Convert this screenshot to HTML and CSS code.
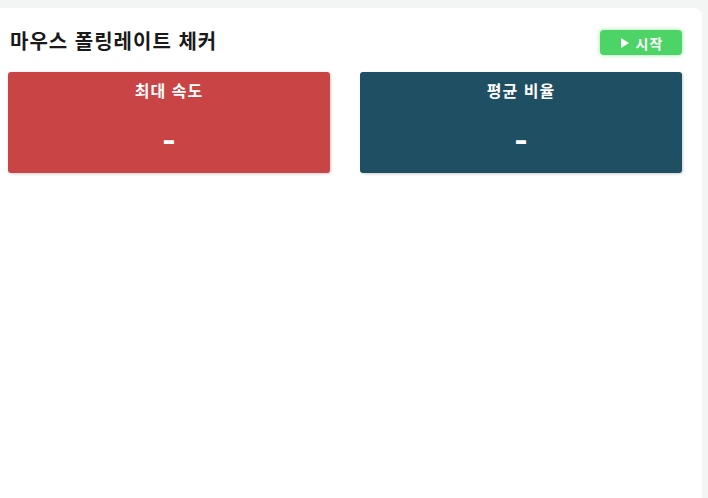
FILE: index.html
```html
<!DOCTYPE html>
<html lang="ko">
<head>
<meta charset="utf-8">
<title>마우스 폴링레이트 체커</title>
<link rel="stylesheet" href="styles.css">
</head>
<body>
<div class="panel">
  <div class="header">
    <h1 class="title">마우스 폴링레이트 체커</h1>
    <button class="start-btn"><span class="tri"></span>시작</button>
  </div>
  <div class="cards">
    <div class="card card-red">
      <div class="card-label">최대 속도</div>
      <div class="card-value">-</div>
    </div>
    <div class="card card-blue">
      <div class="card-label">평균 비율</div>
      <div class="card-value">-</div>
    </div>
  </div>
</div>
</body>
</html>
```

FILE: styles.css
```css
html, body {
  margin: 0;
  height: 100%;
}
body {
  background: #f3f4f4;
  padding: 8px 6px 0 0;
  box-sizing: border-box;
  overflow: hidden;
  font-family: "Noto Sans CJK KR", "Noto Sans", sans-serif;
}
.panel {
  background: #ffffff;
  height: 100%;
  margin-left: -12px;
  padding: 20px;
  box-sizing: border-box;
  border-top-right-radius: 8px;
}
.header {
  display: flex;
  align-items: center;
  justify-content: space-between;
  margin-bottom: 15px;
}
.title {
  margin: 0;
  font-size: 20px;
  font-weight: 700;
  color: #1a1a1a;
  line-height: 29px;
  letter-spacing: 1px;
  padding-left: 2px;
  position: relative;
  top: -2px;
}
.start-btn {
  width: 82px;
  height: 25px;
  border: none;
  border-radius: 4px;
  background: #4cd466;
  color: #ffffff;
  font-family: inherit;
  font-size: 14px;
  font-weight: 700;
  letter-spacing: 1px;
  display: flex;
  align-items: center;
  justify-content: center;
  gap: 7px;
  padding: 0 0 0 2px;
  box-shadow: 0 0 4px rgba(76, 212, 102, 0.6);
}
.tri {
  width: 0;
  height: 0;
  border-left: 8px solid #ffffff;
  border-top: 5px solid transparent;
  border-bottom: 5px solid transparent;
}
.cards {
  display: grid;
  grid-template-columns: 1fr 1fr;
  gap: 30px;
}
.card {
  border-radius: 3px;
  height: 101px;
  box-sizing: border-box;
  padding: 7px 10px 10px;
  color: #ffffff;
  text-align: center;
  box-shadow: 1px 1px 3px rgba(0, 0, 0, 0.2);
}
.card-red { background: #c94444; }
.card-blue { background: #1e4f63; }
.card-label {
  font-size: 16px;
  font-weight: 700;
  line-height: 23px;
  letter-spacing: 1px;
  margin-bottom: 13px;
}
.card-value {
  font-size: 36px;
  font-weight: 700;
  line-height: 50px;
}
```
